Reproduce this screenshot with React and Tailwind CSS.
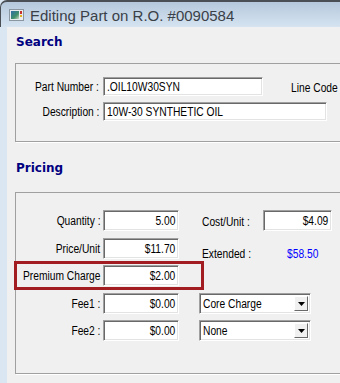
import React from "react";

const sans = { fontFamily: '"Liberation Sans", Arial, sans-serif' };

const sunken =
  "bg-white border border-t-[#a0a0a0] border-l-[#a0a0a0] border-b-white border-r-white shadow-[inset_1px_1px_0_#696969,inset_-1px_-1px_0_#e3e3e3]";

// condensed text: Liberation Sans squeezed to look like the dialog's narrow font
const T = ({ children, right = false, className = "" }) => (
  <span
    className={`inline-block shrink-0 whitespace-nowrap text-[12.5px] leading-[14px] scale-x-[0.82] ${
      right ? "origin-right" : "origin-left"
    } ${className}`}
  >
    {children}
  </span>
);

const Label = ({ children, width }) => (
  <div className={`${width} shrink-0 flex justify-end text-black`}>
    <T right>{children}</T>
  </div>
);

const Field = ({ value, width, height = "h-[21px]", align = "right" }) => (
  <div
    className={`${sunken} ${width} ${height} flex items-center text-black overflow-hidden ${
      align === "right" ? "justify-end pr-[3px]" : "justify-start pl-[3px]"
    }`}
  >
    <T right={align === "right"}>{value}</T>
  </div>
);

const Select = ({ value }) => (
  <div className={`${sunken} w-[112px] h-[21px] flex items-center justify-between pl-[3px] pr-[2px] text-black`}>
    <T>{value}</T>
    <div className="w-[14px] h-[15px] bg-[#f0f0f0] border border-t-white border-l-white border-b-[#696969] border-r-[#696969] flex items-center justify-center">
      <svg width="7" height="4" viewBox="0 0 7 4">
        <path d="M0 0h7L3.5 4z" fill="#000" />
      </svg>
    </div>
  </div>
);

const PriceRow = ({ label, value, className = "", children }) => (
  <div className={`flex items-center h-[21px] ${className}`}>
    <Label width="w-[84px]">{label}</Label>
    <div className="ml-[3px]">
      <Field value={value} width="w-[76px]" />
    </div>
    {children}
  </div>
);

const WindowIcon = () => (
  <svg width="15" height="12" viewBox="0 0 15 12">
    <defs>
      <linearGradient id="ig" x1="0" y1="0" x2="1" y2="1">
        <stop offset="0" stopColor="#2f6fa8" />
        <stop offset="0.6" stopColor="#3e8f6a" />
        <stop offset="1" stopColor="#c9d8c0" />
      </linearGradient>
    </defs>
    <rect x="0.5" y="0.5" width="14" height="11" fill="#e8ecef" stroke="#8a96a0" />
    <rect x="2" y="2" width="8" height="8" fill="url(#ig)" />
    <rect x="11" y="2" width="2" height="3" fill="#c8302c" />
    <rect x="11" y="6" width="2" height="2" fill="#e0b020" />
  </svg>
);

export default function App() {
  return (
    <div className="w-[340px] h-[383px] overflow-hidden bg-[#dbe6f3]" style={sans}>
      {/* title bar */}
      <div className="h-[27px] rounded-tl-[7px] border-t-2 border-l border-[#4a4f55] bg-gradient-to-b from-[#b5c8dc] to-[#d6e4f1] flex items-center pl-[8px]">
        <WindowIcon />
        <span className="ml-[6px] text-[15px] leading-none text-[#3a4048] mt-[2px]">
          Editing Part on R.O. #0090584
        </span>
      </div>

      <div className="flex h-[356px]">
        <div className="w-[7px] bg-[#dbe6f3] shrink-0" />
        <div className="flex-1 bg-[#f0f0f0] overflow-hidden">
          <div
            className="ml-[9px] mt-[8px] text-[12px] leading-[14px] font-bold text-[#000080]"
            style={{ fontFamily: '"DejaVu Sans", Verdana, sans-serif' }}
          >
            Search
          </div>

          {/* search group */}
          <div className="ml-[8px] mt-[14px] w-[360px] h-[79px] border border-[#a0a0a0] shadow-[1px_1px_0_#fff] pt-[13px]">
            <div className="flex items-center h-[19px]">
              <Label width="w-[83px]">Part Number :</Label>
              <div className="ml-[4px]">
                <Field value=".OIL10W30SYN" width="w-[160px]" height="h-[19px]" align="left" />
              </div>
              <div className="ml-[28px] text-black">
                <T>Line Code</T>
              </div>
            </div>
            <div className="flex items-center h-[19px] mt-[6px]">
              <Label width="w-[83px]">Description :</Label>
              <div className="ml-[4px]">
                <Field value="10W-30 SYNTHETIC OIL" width="w-[224px]" height="h-[19px]" align="left" />
              </div>
            </div>
          </div>

          <div
            className="ml-[9px] mt-[19px] text-[12px] leading-[14px] font-bold text-[#000080]"
            style={{ fontFamily: '"DejaVu Sans", Verdana, sans-serif' }}
          >
            Pricing
          </div>

          {/* pricing group */}
          <div className="ml-[8px] mt-[17px] w-[360px] h-[182px] border border-[#a0a0a0] shadow-[1px_1px_0_#fff] pt-[17px]">
            <PriceRow label="Quantity :" value="5.00">
              <div className="ml-[23px] w-[61px] text-black">
                <T>Cost/Unit :</T>
              </div>
              <Field value="$4.09" width="w-[69px]" />
            </PriceRow>
            <PriceRow label="Price/Unit" value="$11.70" className="mt-[7px]">
              <div className="ml-[23px] w-[85px] text-black pt-[8px]">
                <T>Extended :</T>
              </div>
              <div className="text-[#0000ff] pt-[8px]">
                <T>$58.50</T>
              </div>
            </PriceRow>
            <div className="relative mt-[6px]">
              <PriceRow label="Premium Charge" value="$2.00" />
              <div className="absolute left-[-2px] top-[-4px] w-[190px] h-[29px] border-[3px] border-[#a21d22]" />
            </div>
            <PriceRow label="Fee1 :" value="$0.00" className="mt-[7px]">
              <div className="ml-[20px]">
                <Select value="Core Charge" />
              </div>
            </PriceRow>
            <PriceRow label="Fee2 :" value="$0.00" className="mt-[6px]">
              <div className="ml-[20px]">
                <Select value="None" />
              </div>
            </PriceRow>
          </div>
        </div>
      </div>
    </div>
  );
}
